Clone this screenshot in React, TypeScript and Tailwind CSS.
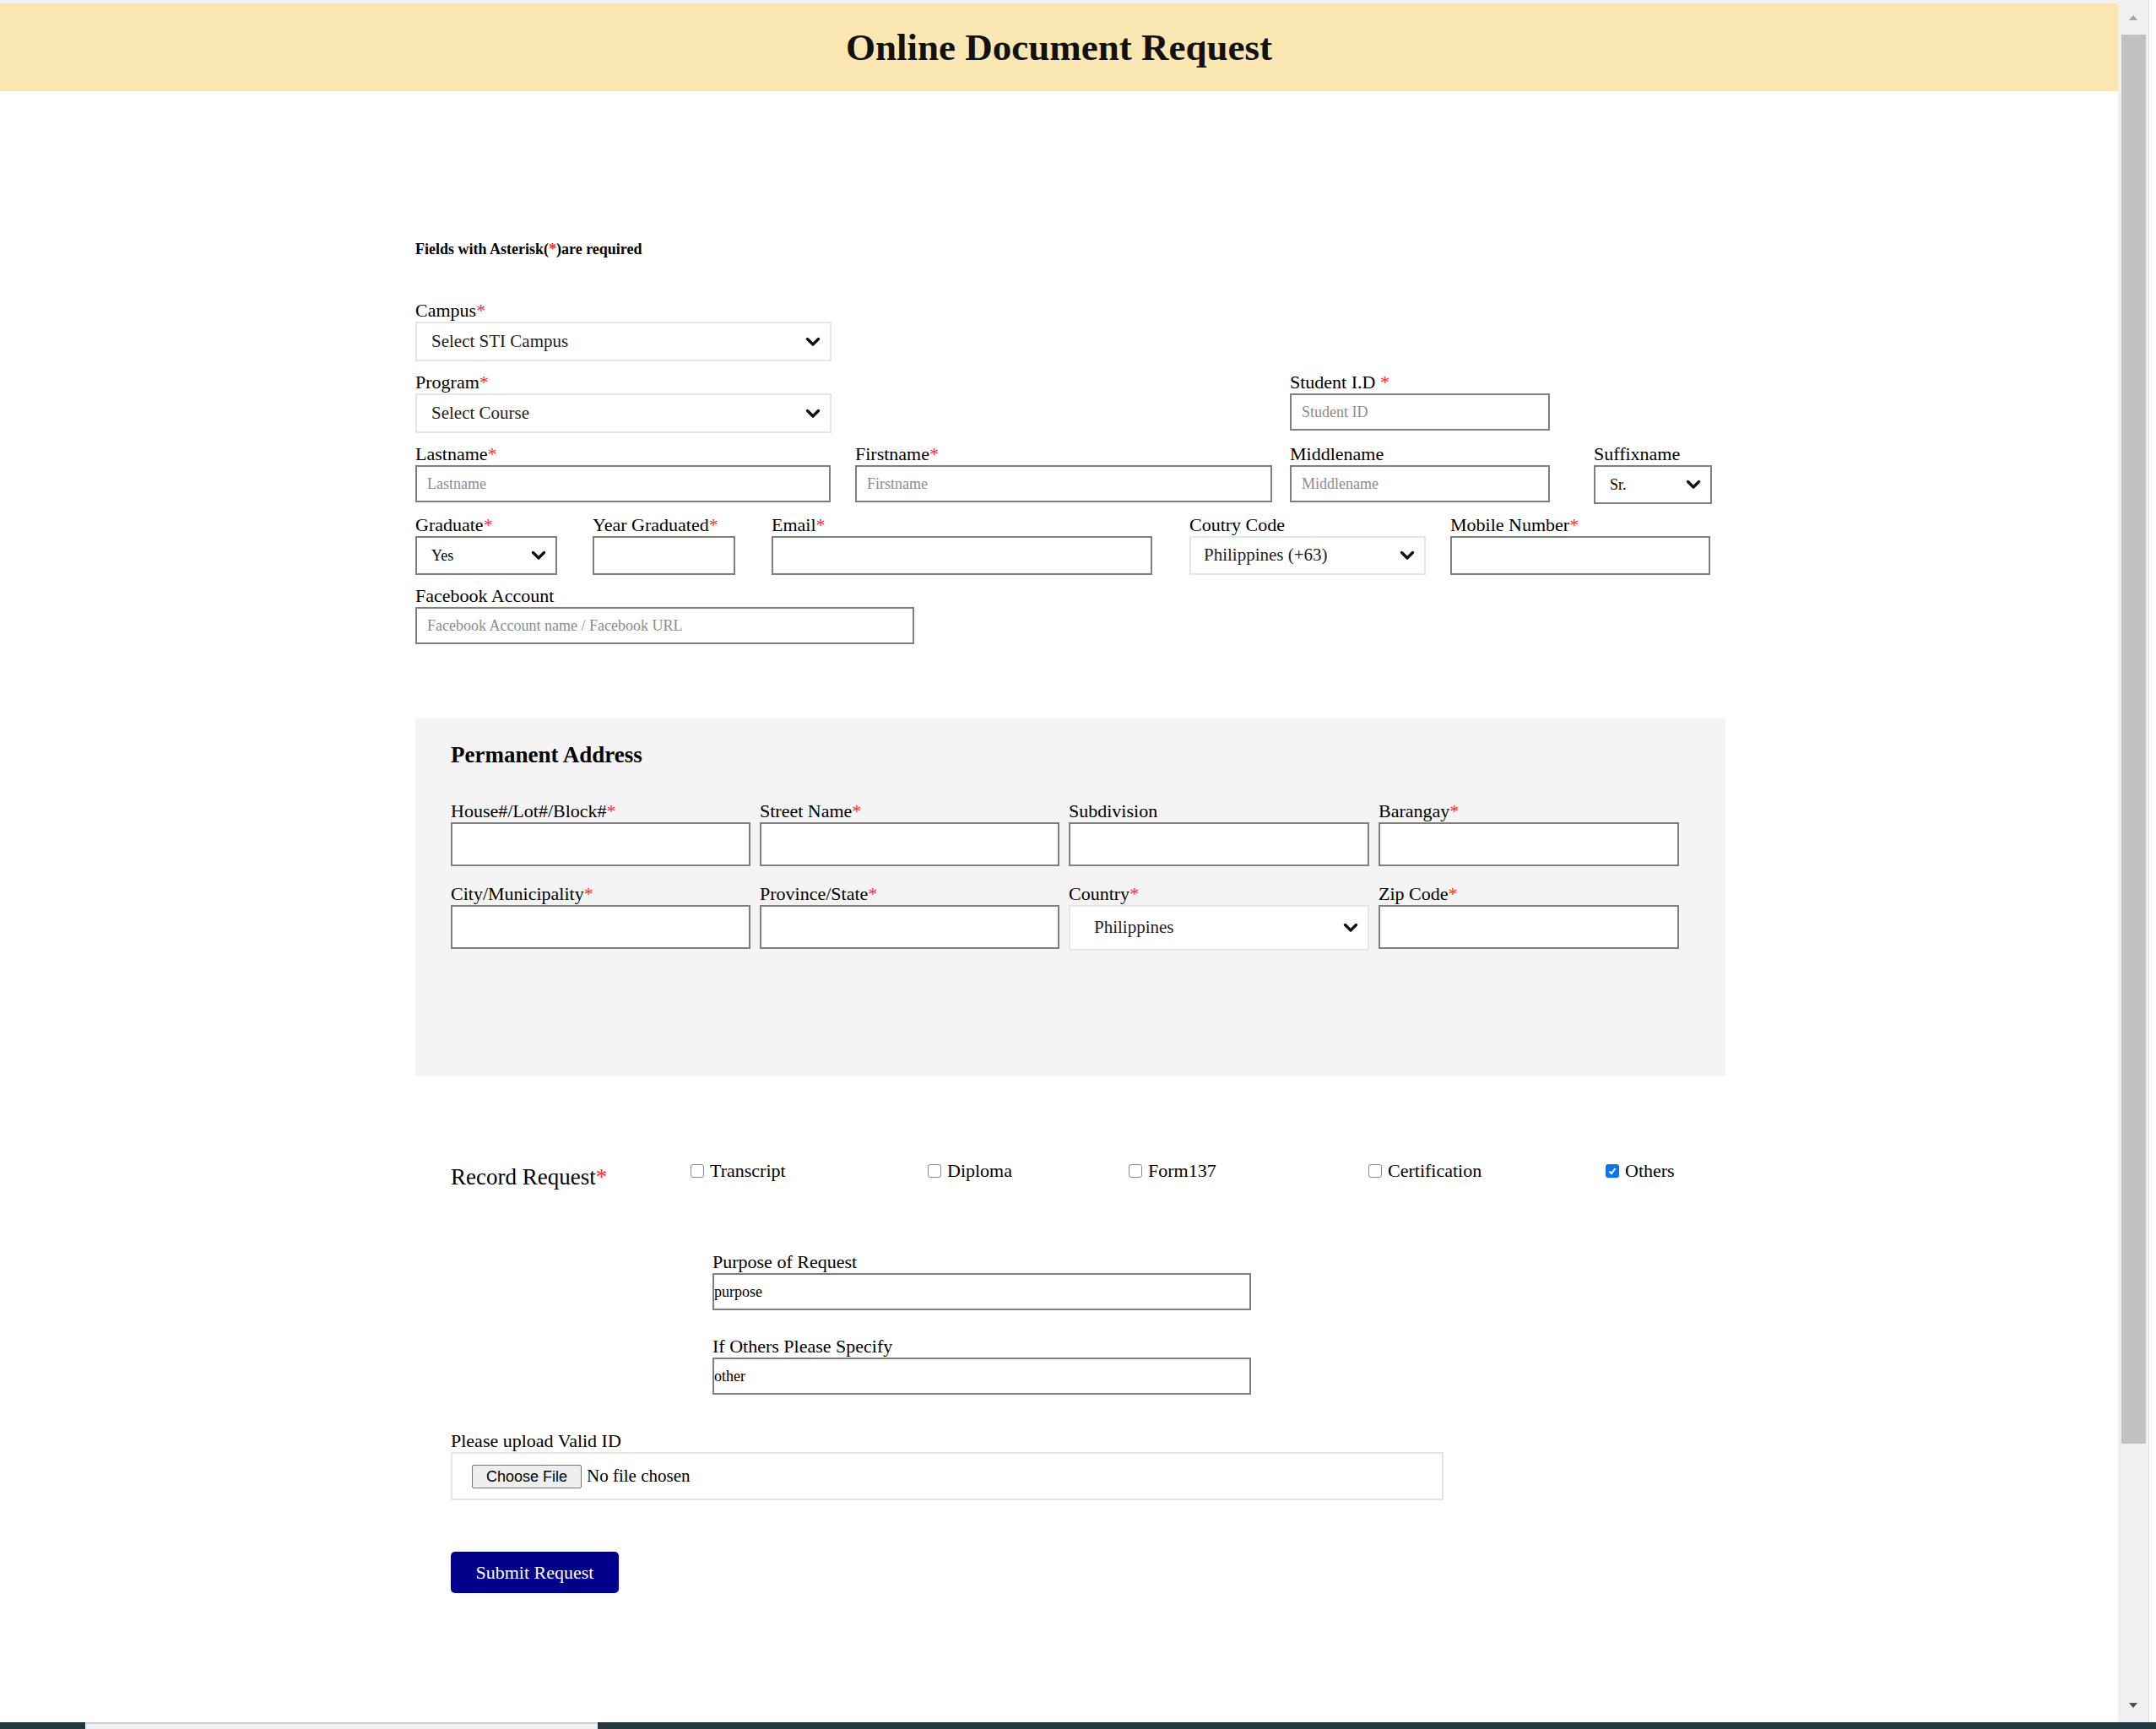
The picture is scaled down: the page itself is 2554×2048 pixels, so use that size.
import React from "react";

function Star() {
  return <span className="text-[#ff2b2b]">*</span>;
}

function Label({ text, req }: { text: string; req?: boolean }) {
  return (
    <div className="h-[26px] whitespace-nowrap text-[22px] leading-[26px] text-black">
      {text}
      {req && <Star />}
    </div>
  );
}

function Chevron() {
  return (
    <svg width="18" height="12" viewBox="0 0 18 12" className="shrink-0">
      <path d="M2.5 2.5 L9 9 L15.5 2.5" fill="none" stroke="#111" strokeWidth="3.4" strokeLinecap="round" strokeLinejoin="round" />
    </svg>
  );
}

function TextInput({ placeholder, value, h = "h-[44px]", pad = "px-[12px]" }: { placeholder?: string; value?: string; h?: string; pad?: string }) {
  return (
    <input
      readOnly
      placeholder={placeholder}
      defaultValue={value}
      className={`${h} ${pad} w-full border-2 border-[#7f7f7f] bg-white text-[18px] text-black outline-none placeholder:text-[#8c8c8c]`}
    />
  );
}

function SoftSelect({ value, pad = "pl-[17px]", h = "h-[47px]" }: { value: string; pad?: string; h?: string }) {
  return (
    <div className={`${h} ${pad} flex w-full items-center justify-between border-2 border-[#e4e4ea] bg-white pr-[11px] text-[21px] text-[#222]`}>
      <span>{value}</span>
      <Chevron />
    </div>
  );
}

function HardSelect({ value }: { value: string }) {
  return (
    <div className="flex h-[46px] w-full items-center justify-between border-2 border-[#7f7f7f] bg-white pl-[17px] pr-[11px] text-[18px] text-black">
      <span>{value}</span>
      <Chevron />
    </div>
  );
}

function Check({ label, checked }: { label: string; checked?: boolean }) {
  return (
    <div className="mb-[14px] flex items-center gap-[7px]">
      {checked ? (
        <span className="flex h-[16px] w-[16px] items-center justify-center rounded-[3px] bg-[#0b74f0]">
          <svg width="12" height="12" viewBox="0 0 12 12">
            <path d="M2.5 6.5 L5 9 L9.5 3" fill="none" stroke="#fff" strokeWidth="2" />
          </svg>
        </span>
      ) : (
        <span className="h-[16px] w-[16px] rounded-[3px] border border-[#8a8a8a] bg-white" />
      )}
      <span className="text-[22px] leading-[26px] text-black">{label}</span>
    </div>
  );
}

export default function App() {
  return (
    <div className="flex h-[2048px] w-[2554px] flex-col overflow-hidden bg-white font-['Liberation_Serif',serif]">
      <div className="flex min-h-0 flex-1">
        <main className="w-[2509px] shrink-0">
          <div className="h-[4px] bg-[#f2f2f2]" />
          <header className="flex h-[104px] items-center justify-center bg-[#f9e6b0]">
            <h1 className="text-[45px] font-bold leading-none text-[#111]">Online Document Request</h1>
          </header>

          <div className="pl-[492px] pt-[177px]">
            <p className="h-[20px] text-[18px] font-bold leading-[20px] text-black">
              Fields with Asterisk(<Star />)are required
            </p>

            <div className="mt-[50px] flex flex-col gap-[12px]">
              <div className="flex">
                <div className="w-[493px]">
                  <Label text="Campus" req />
                  <SoftSelect value="Select STI Campus" />
                </div>
              </div>

              <div className="flex">
                <div className="w-[493px]">
                  <Label text="Program" req />
                  <SoftSelect value="Select Course" />
                </div>
                <div className="ml-[543px] w-[308px]">
                  <Label text="Student I.D " req />
                  <TextInput placeholder="Student ID" />
                </div>
              </div>

              <div className="flex">
                <div className="w-[492px]">
                  <Label text="Lastname" req />
                  <TextInput placeholder="Lastname" />
                </div>
                <div className="ml-[29px] w-[494px]">
                  <Label text="Firstname" req />
                  <TextInput placeholder="Firstname" />
                </div>
                <div className="ml-[21px] w-[308px]">
                  <Label text="Middlename" />
                  <TextInput placeholder="Middlename" />
                </div>
                <div className="ml-[52px] w-[140px]">
                  <Label text="Suffixname" />
                  <HardSelect value="Sr." />
                </div>
              </div>

              <div className="flex">
                <div className="w-[168px]">
                  <Label text="Graduate" req />
                  <HardSelect value="Yes" />
                </div>
                <div className="ml-[42px] w-[169px]">
                  <Label text="Year Graduated" req />
                  <TextInput h="h-[46px]" />
                </div>
                <div className="ml-[43px] w-[451px]">
                  <Label text="Email" req />
                  <TextInput h="h-[46px]" />
                </div>
                <div className="ml-[44px] w-[280px]">
                  <Label text="Coutry Code" />
                  <SoftSelect value="Philippines (+63)" pad="pl-[15px]" h="h-[46px]" />
                </div>
                <div className="ml-[29px] w-[308px]">
                  <Label text="Mobile Number" req />
                  <TextInput h="h-[46px]" />
                </div>
              </div>

              <div className="w-[591px]">
                <Label text="Facebook Account" />
                <TextInput placeholder="Facebook Account name / Facebook URL" />
              </div>
            </div>

            <section className="mt-[87px] h-[424px] w-[1552px] bg-[#f4f4f4] pl-[42px] pt-[30px]">
              <h2 className="text-[27px] font-bold leading-[28px] text-black">Permanent Address</h2>
              <div className="mt-[40px] grid grid-cols-[355px_355px_356px_356px] gap-x-[11px] gap-y-[20px]">
                <div>
                  <Label text="House#/Lot#/Block#" req />
                  <TextInput h="h-[52px]" />
                </div>
                <div>
                  <Label text="Street Name" req />
                  <TextInput h="h-[52px]" />
                </div>
                <div>
                  <Label text="Subdivision" />
                  <TextInput h="h-[52px]" />
                </div>
                <div>
                  <Label text="Barangay" req />
                  <TextInput h="h-[52px]" />
                </div>
                <div>
                  <Label text="City/Municipality" req />
                  <TextInput h="h-[52px]" />
                </div>
                <div>
                  <Label text="Province/State" req />
                  <TextInput h="h-[52px]" />
                </div>
                <div>
                  <Label text="Country" req />
                  <SoftSelect value="Philippines" pad="pl-[28px]" h="h-[54px]" />
                </div>
                <div>
                  <Label text="Zip Code" req />
                  <TextInput h="h-[52px]" />
                </div>
              </div>
            </section>

            <div className="mt-[100px] flex items-center pl-[42px]">
              <div className="w-[284px] text-[27px] leading-[30px] text-black">
                Record Request<Star />
              </div>
              <div className="w-[281px]">
                <Check label="Transcript" />
              </div>
              <div className="w-[238px]">
                <Check label="Diploma" />
              </div>
              <div className="w-[284px]">
                <Check label="Form137" />
              </div>
              <div className="w-[281px]">
                <Check label="Certification" />
              </div>
              <div>
                <Check label="Others" checked />
              </div>
            </div>

            <div className="ml-[352px] mt-[68px] flex w-[638px] flex-col gap-[30px]">
              <div>
                <Label text="Purpose of Request" />
                <TextInput value="purpose" pad="px-0" />
              </div>
              <div>
                <Label text="If Others Please Specify" />
                <TextInput value="other" pad="px-0" />
              </div>
            </div>

            <div className="ml-[42px] mt-[42px] w-[1176px]">
              <Label text="Please upload Valid ID" />
              <div className="flex h-[57px] items-center border-2 border-[#e4e4ea] bg-white pl-[23px]">
                <button className="h-[28px] rounded-[2px] border border-[#767676] bg-[#efefef] px-[16px] font-['Liberation_Sans',sans-serif] text-[18px] leading-none text-black">
                  Choose File
                </button>
                <span className="ml-[6px] text-[21px] text-black">No file chosen</span>
              </div>
            </div>

            <button className="ml-[42px] mt-[61px] h-[49px] w-[199px] rounded-[5px] bg-[#00008b] text-[22px] text-white">
              Submit Request
            </button>
          </div>
        </main>

        <aside className="flex w-[36px] shrink-0 flex-col items-center bg-[#f0f0f0]">
          <div className="flex h-[41px] items-center justify-center">
            <svg width="12" height="8" viewBox="0 0 12 8">
              <path d="M1 7 L6 1 L11 7 Z" fill="#a3a3a3" />
            </svg>
          </div>
          <div className="h-[1669px] w-[29px] bg-[#c1c1c1]" />
          <div className="flex-1" />
          <div className="flex h-[40px] items-center justify-center">
            <svg width="12" height="8" viewBox="0 0 12 8">
              <path d="M1 1 L6 7 L11 1 Z" fill="#505050" />
            </svg>
          </div>
        </aside>
        <div className="w-[9px] shrink-0 border-l border-[#dbe6f4] bg-white" />
      </div>
      <div className="flex h-[8px] bg-[#24363f]">
        <div className="ml-[101px] h-full w-[607px] border-t-2 border-[#cfcfcf] bg-[#f0f0f0]" />
      </div>
    </div>
  );
}
